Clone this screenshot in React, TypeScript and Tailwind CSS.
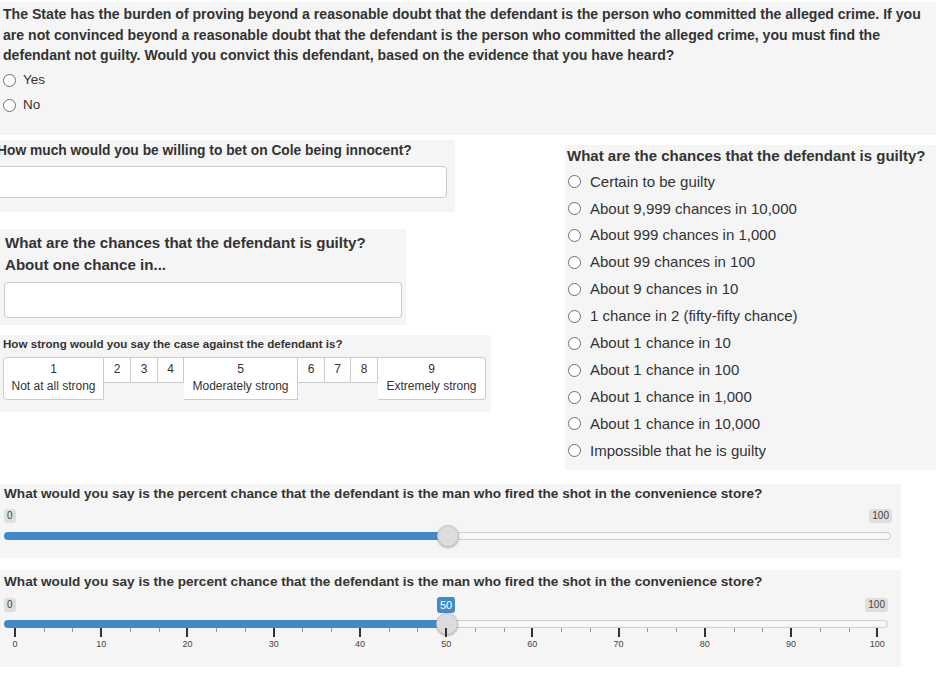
import React from "react";

const RADIO_OPTIONS = [
  "Certain to be guilty",
  "About 9,999 chances in 10,000",
  "About 999 chances in 1,000",
  "About 99 chances in 100",
  "About 9 chances in 10",
  "1 chance in 2 (fifty-fifty chance)",
  "About 1 chance in 10",
  "About 1 chance in 100",
  "About 1 chance in 1,000",
  "About 1 chance in 10,000",
  "Impossible that he is guilty",
];

const STRENGTH = [
  { n: "1", label: "Not at all strong", w: "w-[101px]", first: true },
  { n: "2", w: "w-[27px]" },
  { n: "3", w: "w-[27px]" },
  { n: "4", w: "w-[26px]" },
  { n: "5", label: "Moderately strong", w: "w-[114px]" },
  { n: "6", w: "w-[27px]" },
  { n: "7", w: "w-[26px]" },
  { n: "8", w: "w-[27px]" },
  { n: "9", label: "Extremely strong", w: "w-[108px]", last: true },
];

const TICK_LEFT = 15;
const TICK_STEP = 86.23;

function Radio() {
  return (
    <span className="inline-block w-[13px] h-[13px] shrink-0 rounded-full border border-[#6f6f6f] bg-white" />
  );
}

function Badge({ text, blue }: { text: string; blue?: boolean }) {
  return (
    <span
      className={
        blue
          ? "flex items-center px-[3px] h-[16px] rounded-[3px] bg-[#428bca] text-white text-[11px] leading-none"
          : "flex items-center px-[3px] h-[14px] rounded-[3px] bg-[#dedede] text-[#444] text-[10px] leading-none"
      }
    >
      {text}
    </span>
  );
}

function SliderTrack({ fillTo, end }: { fillTo: number; end: number }) {
  // pixel geometry of an ion.rangeSlider-style track, handle sits on top
  return (
    <div className="relative h-[24px]">
      <div
        className="absolute top-[5px] h-[8px] rounded-full border border-[#cfcfcf] bg-[#f7f7f7]"
        style={{ left: 4, width: end - 4 }}
      />
      <div
        className="absolute top-[5px] h-[8px] rounded-full bg-[#428bca]"
        style={{ left: 4, width: fillTo - 4 }}
      />
      <div
        className="absolute top-[-2px] w-[22px] h-[22px] rounded-full border border-[#c4c4c4] bg-[#dcdcdc] shadow-[0_1px_2px_rgba(0,0,0,0.25)]"
        style={{ left: fillTo - 11 }}
      />
    </div>
  );
}

export default function App() {
  return (
    <div className="w-[938px] h-[677px] overflow-hidden bg-white text-[#333] font-['Liberation_Sans',Arial,sans-serif]">
      {/* ── Convict question ── */}
      <div className="mt-[2px] w-[936px] h-[133px] bg-[#f5f5f5] pl-[3px] pt-[2px]">
        <p className="text-[14.1px] font-bold leading-[20.5px] whitespace-nowrap">
          The State has the burden of proving beyond a reasonable doubt that the defendant is the person who committed the alleged crime. If you
          <br />
          are not convinced beyond a reasonable doubt that the defendant is the person who committed the alleged crime, you must find the
          <br />
          defendant not guilty. Would you convict this defendant, based on the evidence that you have heard?
        </p>
        <div className="mt-[2px] flex flex-col text-[13.5px]">
          {["Yes", "No"].map((o) => (
            <label key={o} className="h-[25px] flex items-center gap-[7px]">
              <Radio />
              {o}
            </label>
          ))}
        </div>
      </div>

      {/* ── Middle row ── */}
      <div className="flex h-[335px]">
        <div className="w-[565px] flex flex-col items-start">
          {/* Bet */}
          <div className="mt-[5px] w-[455px] h-[72px] bg-[#f5f5f5] pt-[2px]">
            <p className="ml-[-3px] text-[13.8px] font-bold leading-[18px] whitespace-nowrap">
              How much would you be willing to bet on Cole being innocent?
            </p>
            <div className="mt-[6px] ml-[-3px] w-[450px] h-[32px] rounded-[4px] border border-[#cccccc] bg-white" />
          </div>

          {/* One chance in */}
          <div className="mt-[17px] w-[406px] h-[96px] bg-[#f5f5f5] pt-[3px] pl-[5px]">
            <p className="text-[15.1px] font-bold leading-[22px]">
              What are the chances that the defendant is guilty?
              <br />
              About one chance in...
            </p>
            <div className="mt-[6px] ml-[-1px] w-[398px] h-[36px] rounded-[4px] border border-[#cccccc] bg-white" />
          </div>

          {/* Strength */}
          <div className="mt-[10px] w-[491px] h-[77px] bg-[#f5f5f5] pt-[1px] pl-[3px]">
            <p className="text-[11.6px] font-bold leading-[15px] whitespace-nowrap">
              How strong would you say the case against the defendant is?
            </p>
            <div className="mt-[6px] flex items-start text-[12px] leading-[17px]">
              {STRENGTH.map((s) => (
                <div
                  key={s.n}
                  className={[
                    s.w,
                    s.label ? "h-[43px]" : "h-[26px]",
                    "pt-[3px] flex flex-col items-center border border-[#cccccc] bg-white",
                    s.first ? "rounded-l-[4px]" : "border-l-0",
                    s.last ? "rounded-r-[4px]" : "",
                  ].join(" ")}
                >
                  <span>{s.n}</span>
                  {s.label && <span className="whitespace-nowrap">{s.label}</span>}
                </div>
              ))}
            </div>
          </div>
        </div>

        {/* Chances list */}
        <div className="mt-[10px] w-[371px] h-[325px] bg-[#f5f5f5] pl-[2px]">
          <p className="text-[15px] font-bold leading-[22px] whitespace-nowrap">
            What are the chances that the defendant is guilty?
          </p>
          <div className="mt-[1.5px] flex flex-col text-[15px]">
            {RADIO_OPTIONS.map((o) => (
              <label key={o} className="h-[26.9px] flex items-center gap-[9px] pl-[1px]">
                <Radio />
                {o}
              </label>
            ))}
          </div>
        </div>
      </div>

      {/* ── Slider without grid ── */}
      <div className="mt-[14px] w-[901px] h-[74px] bg-[#f5f5f5] pt-[1px]">
        <p className="pl-[4px] text-[13.6px] font-bold leading-[18px] whitespace-nowrap">
          What would you say is the percent chance that the defendant is the man who fired the shot in the convenience store?
        </p>
        <div className="mt-[6px] h-[14px] flex justify-between pl-[4px] pr-[9px]">
          <Badge text="0" />
          <Badge text="100" />
        </div>
        <div className="mt-[4px]">
          <SliderTrack fillTo={448} end={891} />
        </div>
      </div>

      {/* ── Slider with grid ── */}
      <div className="mt-[12px] w-[901px] h-[97px] bg-[#f5f5f5] pt-[3px]">
        <p className="pl-[4px] text-[13.6px] font-bold leading-[18px] whitespace-nowrap">
          What would you say is the percent chance that the defendant is the man who fired the shot in the convenience store?
        </p>
        <div className="relative mt-[6px] h-[16px] flex items-center justify-between pl-[4px] pr-[13px]">
          <Badge text="0" />
          <Badge text="100" />
          <span className="absolute top-0 left-[437px]">
            <Badge text="50" blue />
          </span>
        </div>
        <div className="relative mt-[2px] h-[34px]">
          <SliderTrack fillTo={447} end={888} />
          {Array.from({ length: 31 }).map((_, i) => {
            const major = i % 3 === 0;
            const x = TICK_LEFT + (i * TICK_STEP) / 3;
            return (
              <div
                key={i}
                className={
                  major
                    ? "absolute top-[13px] w-[2px] h-[9px] bg-[#333]"
                    : "absolute top-[13px] w-px h-[4px] bg-[#999]"
                }
                style={{ left: Math.round(x) - (major ? 1 : 0) }}
              />
            );
          })}
          {Array.from({ length: 11 }).map((_, i) => (
            <span
              key={i}
              className="absolute top-[24px] w-[30px] -ml-[15px] text-center text-[9px] leading-[11px] text-[#444]"
              style={{ left: TICK_LEFT + i * TICK_STEP }}
            >
              {i * 10}
            </span>
          ))}
        </div>
      </div>
    </div>
  );
}
